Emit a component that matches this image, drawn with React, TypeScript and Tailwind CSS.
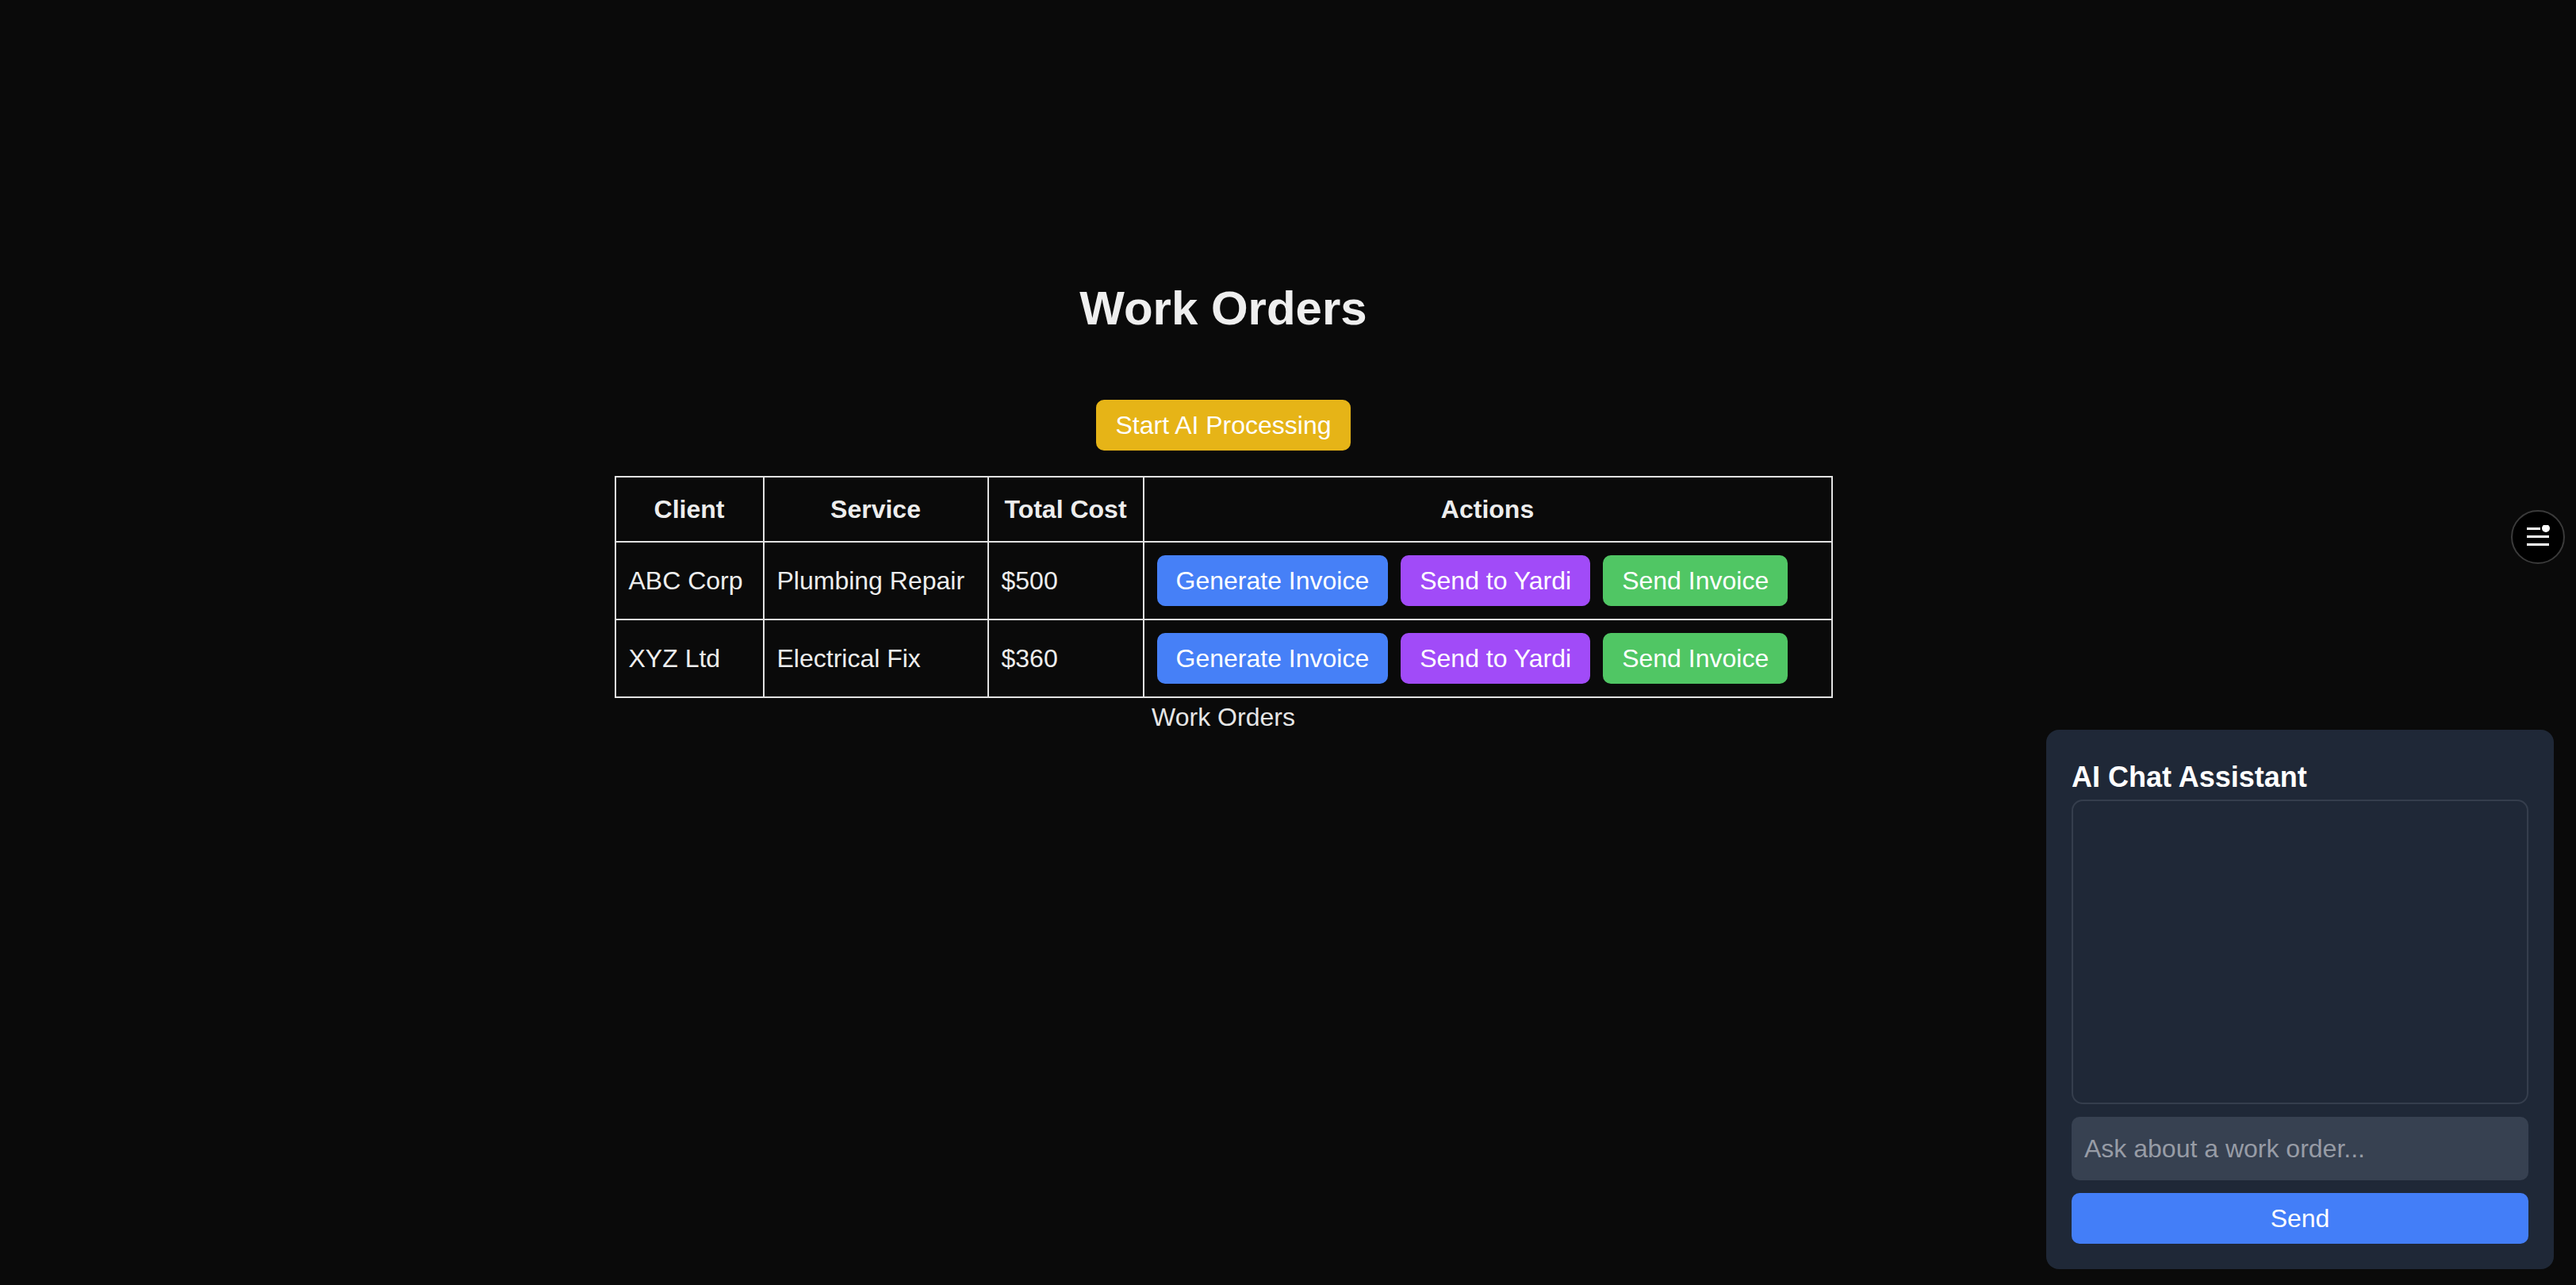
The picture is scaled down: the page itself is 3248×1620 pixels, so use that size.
import { useState } from "react";

type WorkOrder = {
  client: string;
  service: string;
  cost: string;
};

const orders: WorkOrder[] = [
  { client: "ABC Corp", service: "Plumbing Repair", cost: "$500" },
  { client: "XYZ Ltd", service: "Electrical Fix", cost: "$360" },
];

function ActionButton({ color, children }: { color: string; children: string }) {
  return (
    <button
      className={`${color} mr-4 h-16 rounded-[10px] px-6 text-[32px] leading-[48px] text-white`}
    >
      {children}
    </button>
  );
}

function ChatPanel() {
  const [message, setMessage] = useState("");
  return (
    <div className="fixed bottom-[20px] right-[28px] flex w-[640px] flex-col rounded-[16px] bg-[#1f2837] p-8">
      <h2 className="text-[36px] font-bold leading-[56px] text-white">AI Chat Assistant</h2>
      <div className="h-[384px] rounded-[14px] border-2 border-[#353e4d]" />
      <input
        className="mt-4 h-20 rounded-[10px] bg-[#374151] px-4 text-[32px] text-white placeholder:text-[#979ca6] focus:outline-none"
        placeholder="Ask about a work order..."
        value={message}
        onChange={(e) => setMessage(e.target.value)}
      />
      <button className="mt-4 h-16 rounded-[10px] bg-[#437ef8] text-[32px] text-white">Send</button>
    </div>
  );
}

export default function App() {
  return (
    <div className="relative min-h-[1620px] bg-[#0a0a0a] font-['Liberation_Sans',Arial,sans-serif] text-[#ededed]">
      <main className="flex w-[3085px] flex-col items-center pt-[353px]">
        <h1 className="text-[60px] font-bold leading-[72px] text-[#efefef]">Work Orders</h1>
        <button className="mt-[79px] h-16 rounded-[10px] bg-[#e6b417] px-6 text-[32px] leading-[48px] text-white">
          Start AI Processing
        </button>
        <table className="mt-8 w-[1536px] table-fixed border-collapse text-[32px] leading-[48px]">
          <caption className="caption-bottom text-[#e6e6e6]">Work Orders</caption>
          <thead>
            <tr>
              <th className="w-[187px] border-2 border-[#e2e2e2] p-4 font-bold">Client</th>
              <th className="w-[283px] border-2 border-[#e2e2e2] p-4 font-bold">Service</th>
              <th className="w-[196px] border-2 border-[#e2e2e2] p-4 font-bold">Total Cost</th>
              <th className="border-2 border-[#e2e2e2] p-4 font-bold">Actions</th>
            </tr>
          </thead>
          <tbody>
            {orders.map((o) => (
              <tr key={o.client}>
                <td className="border-2 border-[#e2e2e2] p-4 align-middle">{o.client}</td>
                <td className="border-2 border-[#e2e2e2] p-4 align-middle">{o.service}</td>
                <td className="border-2 border-[#e2e2e2] p-4 align-middle">{o.cost}</td>
                <td className="border-2 border-[#e2e2e2] p-4 align-middle whitespace-nowrap">
                  <ActionButton color="bg-[#4680f7]">Generate Invoice</ActionButton>
                  <ActionButton color="bg-[#a14bf8]">Send to Yardi</ActionButton>
                  <ActionButton color="bg-[#50c664]">Send Invoice</ActionButton>
                </td>
              </tr>
            ))}
          </tbody>
        </table>
      </main>

      <button className="absolute right-[14px] top-[643px] flex h-[68px] w-[68px] items-center justify-center rounded-full border-2 border-[#3a3a3a] bg-black">
        <svg width="34" height="30" viewBox="0 0 34 30" fill="none">
          <rect x="3" y="3" width="17" height="3" fill="white" />
          <circle cx="27" cy="4" r="5" fill="white" />
          <rect x="3" y="13" width="28" height="3" fill="white" />
          <rect x="3" y="23" width="28" height="3" fill="white" />
        </svg>
      </button>

      <ChatPanel />
    </div>
  );
}
